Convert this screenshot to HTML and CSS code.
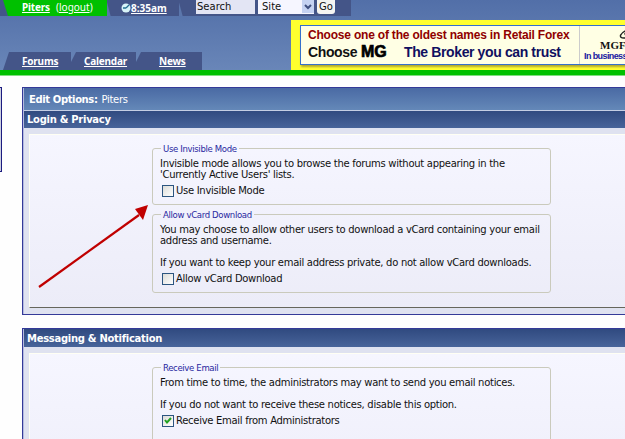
FILE: index.html
```html
<!DOCTYPE html>
<html>
<head>
  <meta charset="UTF-8">
  <title>Edit Options</title>
  <link rel="stylesheet" href="styles.css">
</head>
<body>

<!-- Header -->
<div class="header">
  <div class="left">
    <div class="userbar">
      <div class="user"><a class="name" href="#">Piters</a> <span class="logout">(<a href="#">logout</a>)</span></div>
      <div class="clock">
        <svg width="10" height="10" viewBox="0 0 10 10"><circle cx="5" cy="5" r="4.5" fill="#d8f4f8"/><path d="M5 5L8 2M5 5H2" stroke="#247090" stroke-width="1.3"/></svg>
        <a href="#">8:35am</a>
      </div>
      <div class="search">
        <div class="field">Search</div>
        <div class="select">Site
          <span class="drop"><svg width="8" height="6" viewBox="0 0 8 6"><path d="M1 1L4 4L7 1" fill="none" stroke="#405080" stroke-width="2"/></svg></span>
        </div>
        <div class="go">Go</div>
      </div>
    </div>
    <div class="nav">
      <div class="tab forums"><a href="#">Forums</a></div>
      <div class="tab calendar"><a href="#">Calendar</a></div>
      <div class="tab news"><a href="#">News</a></div>
    </div>
  </div>
  <div class="banner">
    <div class="ad">
      <div class="pitch">
        <div class="line1">Choose one of the oldest names in Retail Forex</div>
        <div class="line2"><span class="choose">Choose</span><span class="mg">MG</span><span class="broker">The Broker you can trust</span></div>
      </div>
      <div class="brand">
        <svg width="20" height="11" viewBox="0 0 20 11"><path d="M11 1C4 4 2 9 8 9H18M11 2Q7 5 11 7" fill="none" stroke="#222" stroke-width="1.4"/></svg>
        <div class="mgf">MGF</div>
        <div class="since">In business</div>
      </div>
    </div>
  </div>
</div>

<!-- Content -->
<div class="content">
  <div class="sidebar"></div>
  <div class="main">
    <div class="box">
      <div class="title"><b>Edit Options:</b> <span>Piters</span></div>
      <div class="head">Login &amp; Privacy</div>
      <div class="surround">
        <div class="panel privacy">
          <fieldset class="invisible">
            <legend>Use Invisible Mode</legend>
            <p>Invisible mode allows you to browse the forums without appearing in the<br>'Currently Active Users' lists.</p>
            <label><span class="check"></span>Use Invisible Mode</label>
          </fieldset>
          <fieldset class="vcard">
            <legend>Allow vCard Download</legend>
            <p>You may choose to allow other users to download a vCard containing your email<br>address and username.<br><br>If you want to keep your email address private, do not allow vCard downloads.</p>
            <label><span class="check"></span>Allow vCard Download</label>
          </fieldset>
        </div>
      </div>
    </div>

    <div class="box">
      <div class="head messaging">Messaging &amp; Notification</div>
      <div class="surround">
        <div class="panel notify">
          <fieldset class="email">
            <legend>Receive Email</legend>
            <p>From time to time, the administrators may want to send you email notices.<br><br>If you do not want to receive these notices, disable this option.</p>
            <label><span class="check"><svg width="10" height="10" viewBox="0 0 10 10"><path d="M2 4L4 6.5L8 2" fill="none" stroke="#21a121" stroke-width="2"/></svg></span>Receive Email from Administrators</label>
          </fieldset>
        </div>
      </div>
    </div>
  </div>
</div>

<!-- Arrow pointing at the option -->
<svg class="arrow" width="112" height="84" viewBox="0 0 112 84">
  <path d="M1 82L101 10" stroke="#c00000" stroke-width="2.2"/>
  <path d="M110 0L97 4L105 15Z" fill="#c00000"/>
</svg>

</body>
</html>
```

FILE: styles.css
```css
body {
  margin: 0;
  height: 439px;
  overflow: hidden;
  background: #fefefe;
  font-family: Verdana, "DejaVu Sans", sans-serif;
  font-size: 10px;
  color: #111;
}
a {
  color: inherit;
}
.header {
  display: flex;
  height: 70px;
  background: linear-gradient(#526fa8, #6986b8);
  border-bottom: 5px solid #00c000;
  box-shadow: 0 1px 0 #80dc80;
}
.left {
  width: 291px;
  flex: none;
  display: flex;
  flex-direction: column;
  justify-content: space-between;
}
.userbar {
  display: flex;
  width: 351px;
  height: 16px;
  line-height: 15px;
  background: #445588;
  color: #fff;
}
.user {
  box-sizing: border-box;
  width: 107px;
  padding-left: 22px;
  background: #00c000;
  clip-path: polygon(3px 0, 107px 0, 107px 16px, 8px 16px);
  white-space: nowrap;
}
.name, .clock, .nav {
  font-family: "Noto Sans", sans-serif;
  font-weight: bold;
}
.name {
  letter-spacing: -0.2px;
}
.logout {
  font-family: "Noto Sans", sans-serif;
  margin-left: 3px;
}
.clock {
  box-sizing: border-box;
  width: 72px;
  padding-left: 14px;
  display: flex;
  align-items: center;
  background: linear-gradient(75deg, #5b76ab 3px, transparent 4px);
}
.search {
  display: flex;
  align-items: flex-start;
  gap: 3px;
  box-sizing: border-box;
  width: 172px;
  padding-left: 17px;
  background: linear-gradient(75deg, #5b76ab 3px, transparent 4px);
  color: #111;
  line-height: 14px;
}
.field {
  width: 58px;
  height: 14px;
  padding-left: 1px;
  background: #e3e5f4;
}
.select {
  display: flex;
  justify-content: space-between;
  width: 52px;
  height: 14px;
  padding-left: 4px;
  background: #f6f6ff;
}
.drop {
  display: flex;
  align-items: center;
  justify-content: center;
  width: 12px;
  height: 13px;
  background: #c5d2f2;
}
.go {
  width: 18px;
  height: 14px;
  border-radius: 0 0 3px 3px;
  background: #f5f5f2;
  text-align: center;
}
.nav {
  display: flex;
  padding-left: 3px;
  line-height: 19px;
  letter-spacing: -0.2px;
  color: #fff;
}
.tab {
  box-sizing: border-box;
  height: 18px;
  background: #445588;
  clip-path: polygon(5px 0, 100% 0, 100% 100%, 0 100%, 0 10px);
}
.forums {
  width: 68px;
  padding-left: 19px;
  clip-path: polygon(6px 0, 100% 0, 100% 100%, 0 100%);
}
.calendar {
  width: 65px;
  padding-left: 13px;
}
.news {
  width: 66px;
  padding-left: 23px;
}
.banner {
  flex: 1;
  box-sizing: border-box;
  height: 50px;
  margin-top: 20px;
  padding: 5px 0 0 9px;
  background: #ffff2e;
  overflow: hidden;
}
.ad {
  display: flex;
  width: 360px;
  height: 38px;
  border: 1px solid #3570cc;
  box-shadow: 1px 2px 2px #b0a830;
  background: #ffffe4;
  font-family: "Liberation Sans", Arial, sans-serif;
  font-weight: bold;
  white-space: nowrap;
}
.pitch {
  width: 271px;
  padding-left: 7px;
  border-right: 1px solid #ccc;
}
.line1 {
  margin-top: 2px;
  font-size: 12px;
  line-height: 15px;
  letter-spacing: -0.2px;
  color: #900000;
}
.line2 {
  display: flex;
  align-items: center;
  height: 17px;
  font-size: 14px;
  letter-spacing: -0.38px;
  color: #101060;
}
.choose {
  width: 53px;
  color: #111;
}
.mg {
  width: 43px;
  font-size: 16px;
  letter-spacing: 0;
  color: #000;
  -webkit-text-stroke: 0.7px #000;
}
.brand {
  padding: 3px 0 0 4px;
  line-height: 9px;
}
.brand svg {
  display: block;
  margin-left: 32px;
}
.mgf {
  padding-left: 16px;
  font: bold 11px/11px "Liberation Serif", serif;
}
.since {
  font-size: 9px;
  line-height: 10px;
  letter-spacing: -0.6px;
  color: #2020a0;
}
.content {
  display: flex;
  box-sizing: border-box;
  height: 364px;
  padding-top: 12px;
  overflow: hidden;
}
.sidebar {
  box-sizing: border-box;
  width: 2px;
  height: 85px;
  margin-right: 20px;
  border: solid #1c1c80;
  border-width: 1px 1px 1px 0;
  background: #ccd0e0;
}
.main {
  flex: 1;
  letter-spacing: -0.29px;
}
.box {
  margin-bottom: 13px;
  border: 1px solid #343a98;
  border-right: 0;
  background: #b4bae0;
}
.title {
  height: 22px;
  line-height: 23px;
  margin-left: 1px;
  padding-left: 5px;
  border-bottom: 1px solid #c4cee4;
  background: linear-gradient(#4a6aa4, #6488b8);
  color: #fff;
}
.title b {
  letter-spacing: -0.38px;
  margin-right: 1px;
}
.head {
  height: 17px;
  line-height: 17px;
  margin-left: 1px;
  padding-left: 3px;
  background: linear-gradient(#304a80, #48649a);
  color: #fff;
  font-weight: bold;
}
.messaging {
  height: 18px;
  line-height: 19px;
}
.surround {
  margin-left: 1px;
  padding: 6px 0 6px 5px;
  background: #dfe2f0;
}
.panel {
  box-sizing: border-box;
  padding: 6px 0 0 122px;
  border: solid #fffff4;
  border-width: 1px 0 0 1px;
  background: linear-gradient(#f6f6ff, #ececf8);
}
.privacy {
  height: 174px;
  border-bottom: 1px solid #66665c;
}
.notify {
  height: 174px;
}
fieldset {
  box-sizing: border-box;
  width: 399px;
  min-width: 0;
  margin: 0 0 2px;
  padding: 0 7px;
  border: 1px solid #cacabc;
  border-radius: 3px;
}
legend {
  margin-left: 1px;
  padding: 2px 2px 0;
  line-height: 12px;
  font-family: Tahoma, "DejaVu Sans Condensed", "DejaVu Sans", sans-serif;
  font-stretch: condensed;
  font-size: 9.5px;
  letter-spacing: -0.35px;
  color: #2828a0;
}
fieldset p {
  margin: 3px 0 5px;
  line-height: 11px;
  white-space: nowrap;
}
.invisible {
  height: 64px;
}
.vcard {
  height: 86px;
}
.email {
  height: 120px;
}
label {
  display: flex;
  align-items: center;
  gap: 2px;
  padding-left: 2px;
  line-height: 12px;
}
.check {
  box-sizing: border-box;
  width: 12px;
  height: 12px;
  border: 1px solid #2c5580;
  background: linear-gradient(135deg, #dcdcd8, #fff);
}
.check svg {
  display: block;
}
.arrow {
  position: absolute;
  left: 38px;
  top: 205px;
}
```
